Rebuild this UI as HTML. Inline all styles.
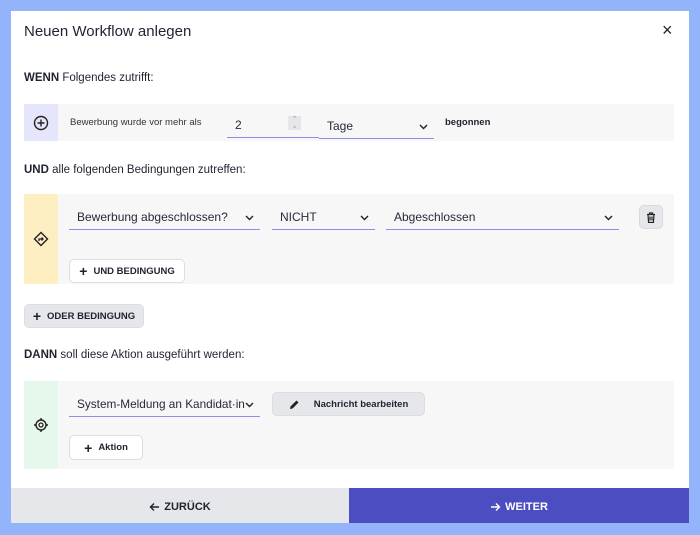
<!DOCTYPE html>
<html><head><meta charset="utf-8"><style>
*{box-sizing:border-box;margin:0;padding:0}
body{width:700px;height:535px;background:#93b4fb;font-family:"Liberation Sans",sans-serif;color:#1f2330;position:relative;overflow:hidden}
.modal{position:absolute;left:11px;top:11px;width:678px;height:512px;background:#fff}
.abs{position:absolute}
.row{position:absolute;left:13px;width:650px;background:#f7f7f8}
.ic{position:absolute;left:0;top:0;bottom:0;width:34px;display:flex;align-items:center;justify-content:center}
.sel{position:absolute;border-bottom:1px solid #8f8ee6;font-size:12px;color:#262a3a;height:24px;line-height:22px;padding-left:8px;white-space:nowrap}
.sel svg{position:absolute;right:6px;top:9px}
.btn{position:absolute;background:#fff;border:1px solid #dcdde2;border-radius:5px;font-size:9.5px;font-weight:bold;display:flex;align-items:center;justify-content:center;gap:6px;color:#1f2330}
.b{font-weight:bold}
</style></head><body>
<div class="modal">
<div class="abs" style="left:13px;top:12px;font-size:15px">Neuen Workflow anlegen</div>
<div class="abs" style="left:651px;top:9px;font-size:18px">×</div>
<div class="abs" style="left:13px;top:61px;font-size:11.5px"><span class="b">WENN</span> Folgendes zutrifft:</div>
<div class="row" style="top:93px;height:37px">
 <div class="ic" style="background:#e5e5fb"><svg width="16" height="16" viewBox="0 0 16 16"><circle cx="8" cy="8" r="6.5" fill="none" stroke="#222" stroke-width="1.4"/><path d="M8 4.5v7M4.5 8h7" stroke="#222" stroke-width="1.4"/></svg></div>
 <div class="abs" style="left:46px;top:13px;font-size:9.5px;color:#333">Bewerbung wurde vor mehr als</div>
 <div class="sel" style="left:203px;top:10px;width:92px">2<span class="abs" style="right:18px;top:2px;width:13px;height:14px;background:#e6e6ea;font-size:7px;line-height:7px;text-align:center;color:#999">⌃<br>⌄</span></div>
 <div class="sel" style="left:295px;top:11px;width:115px">Tage<svg width="9" height="6"><path d="M1 1l3.5 3.5L8 1" fill="none" stroke="#222" stroke-width="1.4"/></svg></div>
 <div class="abs b" style="left:421px;top:13px;font-size:9.5px">begonnen</div>
</div>
<div class="abs" style="left:13px;top:153px;font-size:11.5px"><span class="b">UND</span> alle folgenden Bedingungen zutreffen:</div>
<div class="row" style="top:183px;height:90px">
 <div class="ic" style="background:#fdefc2"><svg width="16" height="16" viewBox="0 0 16 16"><path d="M8 1.5L14.5 8 8 14.5 1.5 8z" fill="none" stroke="#222" stroke-width="1.4"/><path d="M6 10V8h4M8.5 6.5L10 8 8.5 9.5" fill="none" stroke="#222" stroke-width="1.3"/></svg></div>
 <div class="sel" style="left:45px;top:12px;width:191px">Bewerbung abgeschlossen?<svg width="9" height="6"><path d="M1 1l3.5 3.5L8 1" fill="none" stroke="#222" stroke-width="1.4"/></svg></div>
 <div class="sel" style="left:248px;top:12px;width:103px">NICHT<svg width="9" height="6"><path d="M1 1l3.5 3.5L8 1" fill="none" stroke="#222" stroke-width="1.4"/></svg></div>
 <div class="sel" style="left:362px;top:12px;width:233px">Abgeschlossen<svg width="9" height="6"><path d="M1 1l3.5 3.5L8 1" fill="none" stroke="#222" stroke-width="1.4"/></svg></div>
 <div class="abs" style="left:615px;top:11px;width:24px;height:24px;background:#e6e7eb;border:1px solid #d8d9de;border-radius:5px;display:flex;align-items:center;justify-content:center"><svg width="10" height="11" viewBox="0 0 10 11"><path d="M1 2.5h8M3.5 2.5V1h3v1.5M2 2.5l.6 8h4.8l.6-8M4 4.5v4M6 4.5v4" fill="none" stroke="#222" stroke-width="1.2"/></svg></div>
 <div class="btn" style="left:45px;top:65px;width:116px;height:24px"><span style="font-size:14px">+</span>UND BEDINGUNG</div>
</div>
<div class="btn" style="left:13px;top:293px;width:120px;height:24px;background:#e6e7eb"><span style="font-size:14px">+</span>ODER BEDINGUNG</div>
<div class="abs" style="left:13px;top:338px;font-size:11.5px"><span class="b">DANN</span> soll diese Aktion ausgeführt werden:</div>
<div class="row" style="top:370px;height:88px">
 <div class="ic" style="background:#e6f7ec"><svg width="16" height="16" viewBox="0 0 16 16"><circle cx="8" cy="8" r="5" fill="none" stroke="#222" stroke-width="1.4"/><circle cx="8" cy="8" r="2" fill="none" stroke="#222" stroke-width="1.3"/><path d="M8 1v2M8 13v2M1 8h2M13 8h2" stroke="#222" stroke-width="1.4"/></svg></div>
 <div class="sel" style="left:45px;top:12px;width:191px;font-size:11.8px">System-Meldung an Kandidat·in<svg width="9" height="6"><path d="M1 1l3.5 3.5L8 1" fill="none" stroke="#222" stroke-width="1.4"/></svg></div>
 <div class="btn" style="left:248px;top:11px;width:153px;height:24px;background:#e6e7eb;gap:14px"><svg width="11" height="11" viewBox="0 0 11 11"><path d="M1 10l.5-2.5L7.5 1.5l2 2-6 6z" fill="#222"/></svg>Nachricht bearbeiten</div>
 <div class="btn" style="left:45px;top:54px;width:74px;height:25px"><span style="font-size:14px">+</span>Aktion</div>
</div>
<div class="abs" style="left:0;top:477px;width:338px;height:35px;background:#e6e7eb;display:flex;align-items:center;justify-content:center;font-size:11px;font-weight:bold;padding-top:2px;gap:4px"><svg width="11" height="10" viewBox="0 0 11 10"><path d="M10 5H1.5M5 1.5L1.5 5 5 8.5" fill="none" stroke="#1f2330" stroke-width="1.4"/></svg>ZURÜCK</div>
<div class="abs" style="left:338px;top:477px;width:340px;height:35px;background:#4b4dc0;color:#fff;display:flex;align-items:center;justify-content:center;font-size:11px;font-weight:bold;padding-top:2px;gap:4px"><svg width="11" height="10" viewBox="0 0 11 10"><path d="M1 5h8.5M6 1.5L9.5 5 6 8.5" fill="none" stroke="#fff" stroke-width="1.4"/></svg>WEITER</div>
</div>
</body></html>
